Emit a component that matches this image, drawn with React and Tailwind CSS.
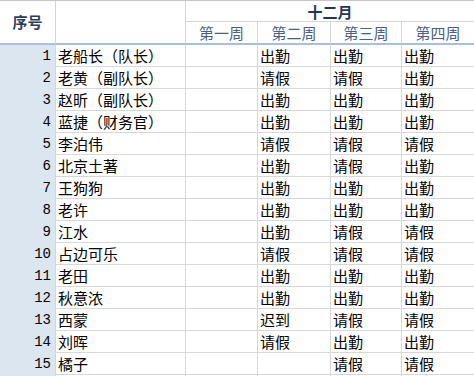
const cols = "grid grid-cols-[56px_130px_72px_73px_71px_72px]";

const rows = [
    ["老船长（队长）", "", "出勤", "出勤", "出勤"],
    ["老黄（副队长）", "", "请假", "请假", "出勤"],
    ["赵昕（副队长）", "", "出勤", "出勤", "出勤"],
    ["蓝捷（财务官）", "", "出勤", "出勤", "出勤"],
    ["李泊伟", "", "请假", "请假", "请假"],
    ["北京土著", "", "出勤", "请假", "出勤"],
    ["王狗狗", "", "出勤", "出勤", "出勤"],
    ["老许", "", "出勤", "出勤", "出勤"],
    ["江水", "", "出勤", "请假", "请假"],
    ["占边可乐", "", "请假", "请假", "请假"],
    ["老田", "", "出勤", "出勤", "出勤"],
    ["秋意浓", "", "出勤", "出勤", "出勤"],
    ["西蒙", "", "迟到", "请假", "请假"],
    ["刘晖", "", "请假", "出勤", "出勤"],
    ["橘子", "", "", "请假", "请假"],
    ["", "", "", "", ""],
];

const weeks = ["第一周", "第二周", "第三周", "第四周"];

export default function App() {

    return (

        <div className="w-[474px] h-[376px] overflow-hidden bg-white text-black font-['Noto_Sans_CJK_SC',sans-serif] text-[15px] leading-none">

            {/* header */}
            <div className={`${cols} grid-rows-[21px_23px] border-t border-[#c6c6c6]`}>

                <div className="row-span-2 flex items-center justify-center border-r border-b-2 border-r-[#d4d4d4] border-b-[#a9bfd9] font-bold text-[#2c3e5c] pb-0.5">
                    序号
                </div>

                <div className="row-span-2 border-r border-b-2 border-r-[#d4d4d4] border-b-[#a9bfd9]"></div>

                <div className="col-span-4 flex items-center justify-center border-b border-[#d4d4d4] font-bold text-[#1f3656]">
                    十二月
                </div>

                {weeks.map((w, i) => (
                    <div
                        key={w}
                        className={`flex items-center justify-center border-b-2 border-b-[#a9bfd9] text-[#4a5e7e] ${i < 3 ? "border-r border-r-[#d4d4d4]" : ""}`}
                    >
                        {w}
                    </div>
                ))}

            </div>

            {/* body */}
            {rows.map((r, idx) => (

                <div key={idx} className={`${cols} h-[22px]`}>

                    <div className="bg-[#dce6f1] border-r border-[#cdd6e2] flex items-center justify-end pr-1 font-['Liberation_Mono',monospace] text-[14px]">
                        {r[0] !== "" ? idx + 1 : ""}
                    </div>

                    {r.map((c, i) => (
                        <div
                            key={i}
                            className={`flex items-center pl-0.5 whitespace-nowrap border-b border-[#d8d8d8] ${i < 4 ? "border-r" : ""}`}
                        >
                            {c}
                        </div>
                    ))}

                </div>

            ))}

        </div>

    );

}
